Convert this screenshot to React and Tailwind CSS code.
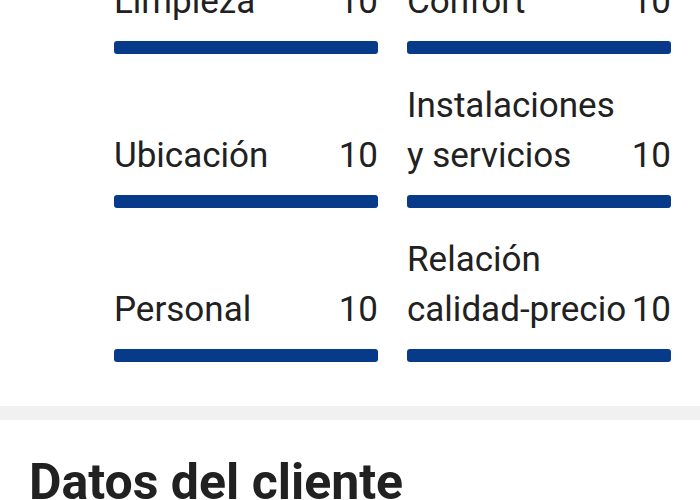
import React from 'react';

const scores = [
  { label: 'Limpieza', value: 10 },
  { label: 'Confort', value: 10 },
  { label: 'Ubicación', value: 10 },
  { label: 'Instalaciones y servicios', value: 10 },
  { label: 'Personal', value: 10 },
  { label: 'Relación calidad-precio', value: 10 },
];

const ScoreItem = ({ label, value }) => (
  <div className="flex flex-col">
    <div className="flex items-end justify-between min-h-[100px] text-[35px] leading-[50px] text-[#212121]">
      <span className="min-w-0">{label}</span>
      <span className="shrink-0">{value}</span>
    </div>
    <div className="mt-[14px] h-[13px] rounded-[3px] bg-[#073a89]" style={{ width: `${value * 10}%` }} />
  </div>
);

const App = () => {
  return (
    <div className="w-[700px] h-[500px] overflow-hidden bg-white font-['Roboto','Noto_Sans',sans-serif]">
      {/* Puntuaciones */}
      <div className="-mt-[73px] pl-[114px] pr-[29px] grid grid-cols-2 gap-x-[29px] gap-y-[27px]">
        {scores.map((s) => (
          <ScoreItem key={s.label} label={s.label} value={s.value} />
        ))}
      </div>

      <div className="mt-[44px] h-[14px] bg-[#f1f1f1]" />

      {/* Datos del cliente */}
      <div className="pt-[34px] pl-[29px]">
        <h2 className="text-[50px] leading-[56px] font-bold text-[#212121] whitespace-nowrap">Datos del cliente</h2>
      </div>
    </div>
  );
};

export default App;
